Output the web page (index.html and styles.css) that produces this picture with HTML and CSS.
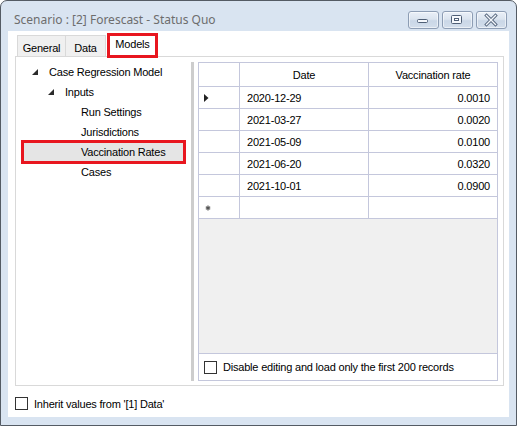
FILE: index.html
```html
<!DOCTYPE html>
<html>
<head>
<meta charset="utf-8">
<title>Scenario</title>
<link rel="stylesheet" href="styles.css">
</head>
<body>
<div class="window">
  <div class="titlebar">
    <div class="title">Scenario : [2] Forescast - Status Quo</div>
    <div class="caption">
      <div class="cbtn">
        <svg width="29" height="16" viewBox="0 0 29 16"><rect x="8.5" y="7.5" width="10" height="3" rx="1" fill="#f5f8fc" stroke="#4f5f76"/></svg>
      </div>
      <div class="cbtn">
        <svg width="29" height="16" viewBox="0 0 29 16"><rect x="8.5" y="3.5" width="10" height="8" rx="1" fill="#f5f8fc" stroke="#4f5f76"/><rect x="11.5" y="6.5" width="4" height="2" fill="#ffffff" stroke="#4f5f76"/></svg>
      </div>
      <div class="cbtn">
        <svg width="29" height="16" viewBox="0 0 29 16"><path d="M9.5 3.5 L18.5 12.5 M18.5 3.5 L9.5 12.5" stroke="#5a6a80" stroke-width="3.2" stroke-linecap="square" fill="none"/><path d="M9.5 3.5 L18.5 12.5 M18.5 3.5 L9.5 12.5" stroke="#f5f8fc" stroke-width="1.3" stroke-linecap="square" fill="none"/></svg>
      </div>
    </div>
  </div>
  <div class="client">
    <div class="tabcontrol">
      <div class="tabstrip">
        <div class="tab t-general">General</div>
        <div class="tab t-data">Data</div>
        <div class="tab t-models">Models</div>
      </div>
      <div class="tabpage">
        <div class="tree">
          <div class="node lvl0"><span class="exp"><svg width="6" height="6" viewBox="0 0 6 6"><polygon points="6,0 6,6 0,6" fill="#2b2b2b"/></svg></span><span>Case Regression Model</span></div>
          <div class="node lvl1"><span class="exp"><svg width="6" height="6" viewBox="0 0 6 6"><polygon points="6,0 6,6 0,6" fill="#2b2b2b"/></svg></span><span>Inputs</span></div>
          <div class="node lvl2">Run Settings</div>
          <div class="node lvl2">Jurisdictions</div>
          <div class="node lvl2 selected">Vaccination Rates</div>
          <div class="node lvl2">Cases</div>
        </div>
        <div class="splitter"></div>
        <div class="gridpanel">
          <div class="row head">
            <div class="cell rh"></div>
            <div class="cell date">Date</div>
            <div class="cell rate">Vaccination rate</div>
          </div>
          <div class="row">
            <div class="cell rh"><svg width="5" height="8" viewBox="0 0 5 8"><polygon points="0,0 4.5,4 0,8" fill="#222"/></svg></div>
            <div class="cell date">2020-12-29</div>
            <div class="cell rate">0.0010</div>
          </div>
          <div class="row">
            <div class="cell rh"></div>
            <div class="cell date">2021-03-27</div>
            <div class="cell rate">0.0020</div>
          </div>
          <div class="row">
            <div class="cell rh"></div>
            <div class="cell date">2021-05-09</div>
            <div class="cell rate">0.0100</div>
          </div>
          <div class="row">
            <div class="cell rh"></div>
            <div class="cell date">2021-06-20</div>
            <div class="cell rate">0.0320</div>
          </div>
          <div class="row">
            <div class="cell rh"></div>
            <div class="cell date">2021-10-01</div>
            <div class="cell rate">0.0900</div>
          </div>
          <div class="row">
            <div class="cell rh newrow"><svg width="6" height="6" viewBox="0 0 6 6"><path d="M3 0.5 V5.5 M0.8 1.7 L5.2 4.3 M5.2 1.7 L0.8 4.3" stroke="#555" stroke-width="1.2" fill="none"/></svg></div>
            <div class="cell date"></div>
            <div class="cell rate"></div>
          </div>
          <div class="empty"></div>
          <div class="gfoot"><span class="checkbox"></span><span>Disable editing and load only the first 200 records</span></div>
        </div>
      </div>
    </div>
    <div class="footer"><span class="checkbox"></span><span>Inherit values from '[1] Data'</span></div>
  </div>
</div>
</body>
</html>
```

FILE: styles.css
```css
* {
  box-sizing: border-box;
}

html, body {
  margin: 0;
  padding: 0;
}

body {
  width: 517px;
  height: 426px;
  overflow: hidden;
  background: #ffffff;
  font-family: "Liberation Sans", Arial, sans-serif;
  font-size: 11px;
  letter-spacing: -0.2px;
  color: #000000;
}

.window {
  width: 517px;
  height: 426px;
  border: 1px solid #545b64;
  border-radius: 7px 7px 0 0;
  background: #d9e4f1;
  display: flex;
  flex-direction: column;
  padding: 0 7px 8px 7px;
}

.titlebar {
  height: 30px;
  display: flex;
  align-items: flex-start;
}

.title {
  flex: 1;
  margin-top: 11px;
  padding-left: 6px;
  font-family: "Noto Sans", "Open Sans", sans-serif;
  font-size: 12px;
  letter-spacing: 0;
  line-height: 16px;
  color: #6d6d6d;
  white-space: nowrap;
}

.caption {
  display: flex;
  gap: 3px;
  margin-top: 10px;
  margin-right: 2px;
}

.cbtn {
  width: 31px;
  height: 18px;
  border: 1px solid #8d9db4;
  border-radius: 3px;
  background: linear-gradient(#eaf0f8 0%, #dbe4ef 45%, #cad7e7 55%, #d3deeb 100%);
  box-shadow: inset 0 0 0 1px rgba(255, 255, 255, 0.55);
  display: flex;
}

.cbtn svg {
  display: block;
}

.client {
  flex: 1;
  background: #ffffff;
  display: flex;
  flex-direction: column;
}

.tabcontrol {
  margin: 2px 0 0 7px;
  width: 489px;
}

.tabstrip {
  height: 23px;
  display: flex;
  align-items: flex-end;
  padding-left: 2px;
}

.tab {
  height: 21px;
  border: 1px solid #d9d9d9;
  border-bottom: none;
  background: #f0f0f0;
  text-align: center;
  padding-top: 6px;
  line-height: 13px;
  white-space: nowrap;
}

.t-general {
  width: 49px;
}

.t-data {
  width: 41px;
  margin-left: -1px;
}

.t-models {
  width: 51px;
  height: 25px;
  margin-left: 1px;
  margin-bottom: -2px;
  border: 3px solid #e8161f;
  background: #ffffff;
  padding-top: 2px;
  position: relative;
  z-index: 1;
}

.tabpage {
  height: 330px;
  border: 1px solid #d9d9d9;
  background: #ffffff;
  display: flex;
  align-items: flex-start;
}

.tree {
  width: 174px;
  padding-top: 5px;
}

.node {
  height: 20px;
  line-height: 20px;
  display: flex;
  align-items: center;
  white-space: nowrap;
}

.exp {
  width: 17px;
  display: flex;
  align-items: center;
}

.exp svg {
  display: block;
}

.lvl0 {
  padding-left: 16px;
}

.lvl1 {
  padding-left: 32px;
}

.lvl2 {
  padding-left: 65px;
}

.node.selected {
  margin-left: 7px;
  width: 161px;
  padding-left: 58px;
  background: #e5e5e5;
  outline: 3px solid #e8161f;
  outline-offset: -1px;
}

.splitter {
  width: 3px;
  height: 319px;
  margin-top: 5px;
  margin-left: 1px;
  background: #cdcdcd;
}

.gridpanel {
  width: 300px;
  height: 319px;
  margin: 5px 0 0 4px;
  border: 1px solid #c4c7dc;
  display: flex;
  flex-direction: column;
}

.row {
  display: flex;
  height: 22px;
  border-bottom: 1px solid #c4c7dc;
  flex: none;
}

.row.head {
  height: 24px;
}

.cell {
  display: flex;
  align-items: center;
  white-space: nowrap;
}

.rh {
  width: 41px;
  border-right: 1px solid #c4c7dc;
  padding-left: 5px;
}

.rh svg {
  display: block;
}

.newrow {
  padding-left: 6px;
}

.date {
  width: 129px;
  border-right: 1px solid #c4c7dc;
  padding-left: 7px;
}

.rate {
  flex: 1;
  justify-content: flex-end;
  padding-right: 7px;
}

.head .date,
.head .rate {
  justify-content: center;
  padding: 0;
}

.empty {
  flex: 1;
  background: #f0f0f0;
  border-bottom: 1px solid #c4c7dc;
}

.gfoot {
  height: 26px;
  flex: none;
  display: flex;
  align-items: center;
  padding-left: 5px;
  white-space: nowrap;
}

.checkbox {
  width: 13px;
  height: 13px;
  border: 1px solid #333333;
  background: #ffffff;
  margin-right: 6px;
  flex: none;
}

.footer {
  display: flex;
  align-items: center;
  height: 13px;
  margin-top: 11px;
  padding-left: 7px;
  white-space: nowrap;
}
```
